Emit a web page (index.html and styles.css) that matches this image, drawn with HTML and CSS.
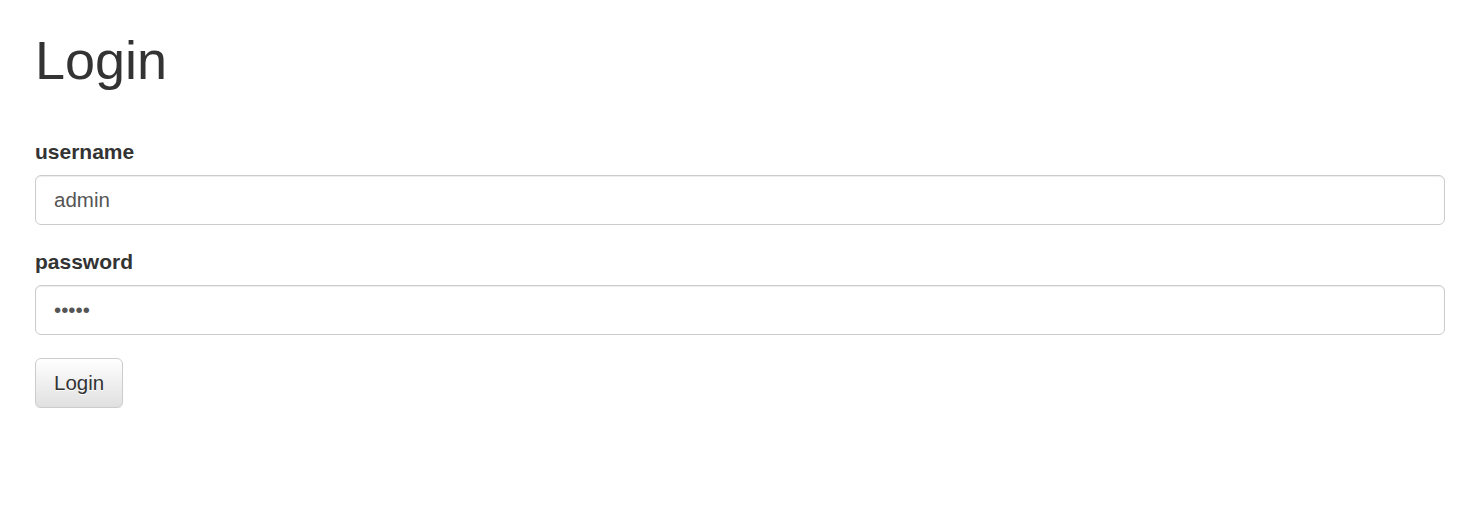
FILE: index.html
```html
<!DOCTYPE html>
<html lang="en">
<head>
<meta charset="utf-8">
<title>Login</title>
<link rel="stylesheet" href="styles.css">
</head>
<body>
<div class="container">
  <h1 class="title">Login</h1>
  <form class="login-form">
    <div class="form-group">
      <label class="field-label" for="username">username</label>
      <input class="form-control" id="username" type="text" value="admin">
    </div>
    <div class="form-group">
      <label class="field-label" for="password">password</label>
      <input class="form-control" id="password" type="password" value="admin">
    </div>
    <button class="btn-default" type="button">Login</button>
  </form>
</div>
</body>
</html>
```
FILE: styles.css
```css
* { box-sizing: border-box; }
html, body { margin: 0; padding: 0; background: #fff; }
body {
  font-family: "Liberation Sans", Arial, sans-serif;
  font-size: 20.5px;
  line-height: 1.42857;
  color: #333;
}
.container {
  padding: 0 34px 0 35px;
}
.title {
  margin: 32px 0 49px;
  font-size: 54px;
  font-weight: 500;
  line-height: 57px;
  color: #333;
}
.login-form { display: flex; flex-direction: column; align-items: flex-start; }
.form-group {
  width: 100%;
  margin-bottom: 23px;
  display: flex;
  flex-direction: column;
}
.field-label {
  display: block;
  font-size: 21px;
  font-weight: bold;
  margin-bottom: 9px;
  line-height: 28px;
}
.form-control {
  display: block;
  width: 100%;
  height: 50px;
  padding: 9px 18px;
  font-family: inherit;
  font-size: 20.5px;
  color: #555;
  background: #fff;
  border: 1px solid #ccc;
  border-radius: 6px;
  box-shadow: inset 0 1px 1px rgba(0,0,0,.075);
  outline: none;
}
.btn-default {
  height: 50px;
  padding: 9px 18px;
  font-family: inherit;
  font-size: 20.5px;
  color: #333;
  background: linear-gradient(to bottom, #fff 0, #e0e0e0 100%);
  border: 1px solid #ccc;
  border-radius: 6px;
  text-shadow: 0 1px 0 #fff;
  box-shadow: inset 0 1px 0 rgba(255,255,255,.15), 0 1px 1px rgba(0,0,0,.075);
  cursor: pointer;
}
```
